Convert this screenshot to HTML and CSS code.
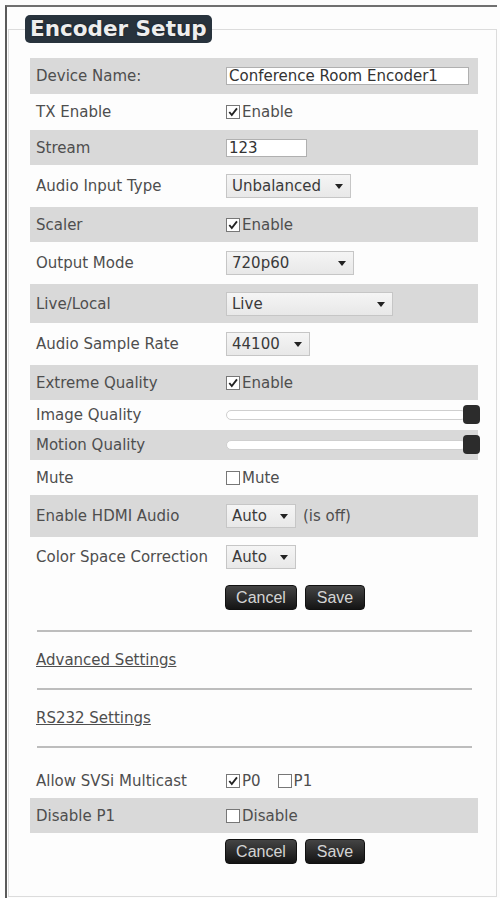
FILE: index.html
```html
<!DOCTYPE html>
<html>
<head>
<meta charset="utf-8">
<link rel="stylesheet" href="styles.css">
</head>
<body>
<div class="frame">
  <fieldset class="setup">
    <legend class="title">Encoder Setup</legend>

    <div class="rows">
      <div class="row r-input alt">
        <span class="label">Device Name:</span>
        <span class="text-input w-name">Conference Room Encoder1</span>
      </div>
      <div class="row r-input">
        <span class="label">TX Enable</span>
        <span class="chk"><span class="box"><svg viewBox="0 0 13 13"><path d="M2.5 6.5 L5.2 9.8 L10.8 2.6" /></svg></span>Enable</span>
      </div>
      <div class="row r-check alt">
        <span class="label">Stream</span>
        <span class="text-input w-stream">123</span>
      </div>
      <div class="row r-select">
        <span class="label">Audio Input Type</span>
        <span class="select w-unbal">Unbalanced<i class="arrow"></i></span>
      </div>
      <div class="row r-check alt">
        <span class="label">Scaler</span>
        <span class="chk"><span class="box"><svg viewBox="0 0 13 13"><path d="M2.5 6.5 L5.2 9.8 L10.8 2.6" /></svg></span>Enable</span>
      </div>
      <div class="row r-select">
        <span class="label">Output Mode</span>
        <span class="select w-mode">720p60<i class="arrow"></i></span>
      </div>
      <div class="row r-select-s alt">
        <span class="label">Live/Local</span>
        <span class="select w-live">Live<i class="arrow"></i></span>
      </div>
      <div class="row r-select">
        <span class="label">Audio Sample Rate</span>
        <span class="select w-rate">44100<i class="arrow"></i></span>
      </div>
      <div class="row r-check alt">
        <span class="label">Extreme Quality</span>
        <span class="chk"><span class="box"><svg viewBox="0 0 13 13"><path d="M2.5 6.5 L5.2 9.8 L10.8 2.6" /></svg></span>Enable</span>
      </div>
      <div class="row r-slider">
        <span class="label">Image Quality</span>
        <span class="slider"><span class="track"></span><span class="knob"></span></span>
      </div>
      <div class="row r-slider alt">
        <span class="label">Motion Quality</span>
        <span class="slider"><span class="track"></span><span class="knob"></span></span>
      </div>
      <div class="row r-check">
        <span class="label">Mute</span>
        <span class="chk"><span class="box"></span>Mute</span>
      </div>
      <div class="row r-select alt">
        <span class="label">Enable HDMI Audio</span>
        <span class="ctrl"><span class="select w-auto">Auto<i class="arrow"></i></span><span class="note">(is off)</span></span>
      </div>
      <div class="row r-select-s">
        <span class="label">Color Space Correction</span>
        <span class="select w-auto">Auto<i class="arrow"></i></span>
      </div>
    </div>

    <div class="buttons first">
      <button class="btn btn-cancel">Cancel</button>
      <button class="btn btn-save">Save</button>
    </div>

    <hr class="sep first-sep">
    <div class="link-row"><a class="link" href="#">Advanced Settings</a></div>
    <hr class="sep">
    <div class="link-row"><a class="link" href="#">RS232 Settings</a></div>
    <hr class="sep">

    <div class="rows multi">
      <div class="row r-check">
        <span class="label">Allow SVSi Multicast</span>
        <span class="ctrl">
          <span class="chk"><span class="box"><svg viewBox="0 0 13 13"><path d="M2.5 6.5 L5.2 9.8 L10.8 2.6" /></svg></span>P0</span>
          <span class="chk p1"><span class="box"></span>P1</span>
        </span>
      </div>
      <div class="row r-check alt">
        <span class="label">Disable P1</span>
        <span class="chk"><span class="box"></span>Disable</span>
      </div>
    </div>

    <div class="buttons second">
      <button class="btn btn-cancel">Cancel</button>
      <button class="btn btn-save">Save</button>
    </div>
  </fieldset>
</div>
</body>
</html>
```

FILE: styles.css
```css
* { box-sizing: border-box; }

html, body {
  margin: 0;
  padding: 0;
  background: #fdfdfd;
  font-family: "DejaVu Sans", Verdana, sans-serif;
  color: #4e4e4e;
}

.frame {
  margin: 5px 0 0 5px;
  width: 492px;
  height: 893px;
  border-top: 2px solid #707070;
  border-left: 2px solid #5a5a5a;
  display: flex;
  flex-direction: column;
}

.setup {
  flex: 1;
  margin: 8px 0 1px 1px;
  padding: 15px 18px 0 21px;
  border: 1px solid #dcdcdc;
  min-width: 0;
}

.title {
  margin-left: -5px;
  padding: 2px 5px;
  background: #28333d;
  border-radius: 5px;
  color: #eeeeee;
  font-weight: bold;
  font-size: 21.5px;
  line-height: 24px;
  text-shadow: 0 0 2px rgba(0,0,0,0.6);
}

.rows { display: flex; flex-direction: column; }

.row {
  display: grid;
  grid-template-columns: 196px 1fr;
  align-items: center;
  font-size: 15px;
}
.row.alt { background: #d9d9d9; }
.r-input { height: 36px; }
.r-check { height: 35px; }
.r-select { height: 42px; }
.r-select-s { height: 39px; }
.r-slider { height: 30px; }

.label { padding-left: 6px; color: #4e4e4e; white-space: nowrap; }

.ctrl { display: flex; align-items: center; }

.text-input {
  display: block;
  height: 18px;
  border: 1px solid #b0b0b0;
  background: #fff;
  padding: 0 2px;
  font-size: 15px;
  line-height: 16px;
  color: #333;
  white-space: nowrap;
  overflow: hidden;
}
.w-name { width: 243px; }
.w-stream { width: 81px; }

.chk {
  display: inline-flex;
  align-items: center;
  font-size: 15px;
  color: #4e4e4e;
}
.box {
  width: 14px;
  height: 14px;
  border: 1px solid #777;
  background: #fff;
  margin-right: 2px;
  display: inline-block;
}
.box svg { display: block; width: 12px; height: 12px; }
.box svg path {
  fill: none;
  stroke: #222;
  stroke-width: 2;
}
.p1 { margin-left: 17px; }

.select {
  position: relative;
  display: block;
  height: 24px;
  border: 1px solid #c6c6c6;
  background: linear-gradient(#f5f5f5, #e8e8e8);
  padding-left: 5px;
  font-size: 15px;
  line-height: 22px;
  color: #3a3a3a;
}
.w-unbal { width: 125px; }
.w-mode { width: 128px; }
.w-live { width: 167px; }
.w-rate { width: 84px; }
.w-auto { width: 70px; }

.arrow {
  position: absolute;
  right: 7px;
  top: 9px;
  width: 0;
  height: 0;
  border-left: 4px solid transparent;
  border-right: 4px solid transparent;
  border-top: 5px solid #222;
}

.note { margin-left: 7px; font-size: 15px; color: #4e4e4e; }

.slider {
  position: relative;
  display: block;
  width: 254px;
  height: 20px;
}
.track {
  position: absolute;
  left: 0;
  top: 5px;
  width: 240px;
  height: 10px;
  border: 1px solid #cfcfcf;
  border-radius: 5px;
  background: #fff;
}
.knob {
  position: absolute;
  right: 0;
  top: 0;
  width: 17px;
  height: 19px;
  border-radius: 4px;
  background: #2c2c2c;
}

.buttons {
  display: flex;
  gap: 8px;
  padding-left: 195px;
}
.buttons.first { padding-top: 9px; height: 42px; }
.buttons.second { padding-top: 6px; }

.btn {
  height: 25px;
  border: 1px solid #111;
  border-radius: 4px;
  background: linear-gradient(#444, #141414);
  color: #d4d4d4;
  font-family: "Liberation Sans", Arial, sans-serif;
  font-size: 16px;
  padding: 0;
}
.btn-cancel { width: 72px; }
.btn-save { width: 60px; }

.sep {
  margin: 0 6px 0 7px;
  border: 0;
  border-top: 2px solid #bdbdbd;
  height: 0;
}
.first-sep { margin-top: 12px; }

.link-row {
  height: 56px;
  display: flex;
  align-items: center;
  padding-left: 6px;
}
.link {
  color: #4e4e4e;
  font-size: 15px;
  text-decoration: underline;
}

.multi { margin-top: 15px; }
```
